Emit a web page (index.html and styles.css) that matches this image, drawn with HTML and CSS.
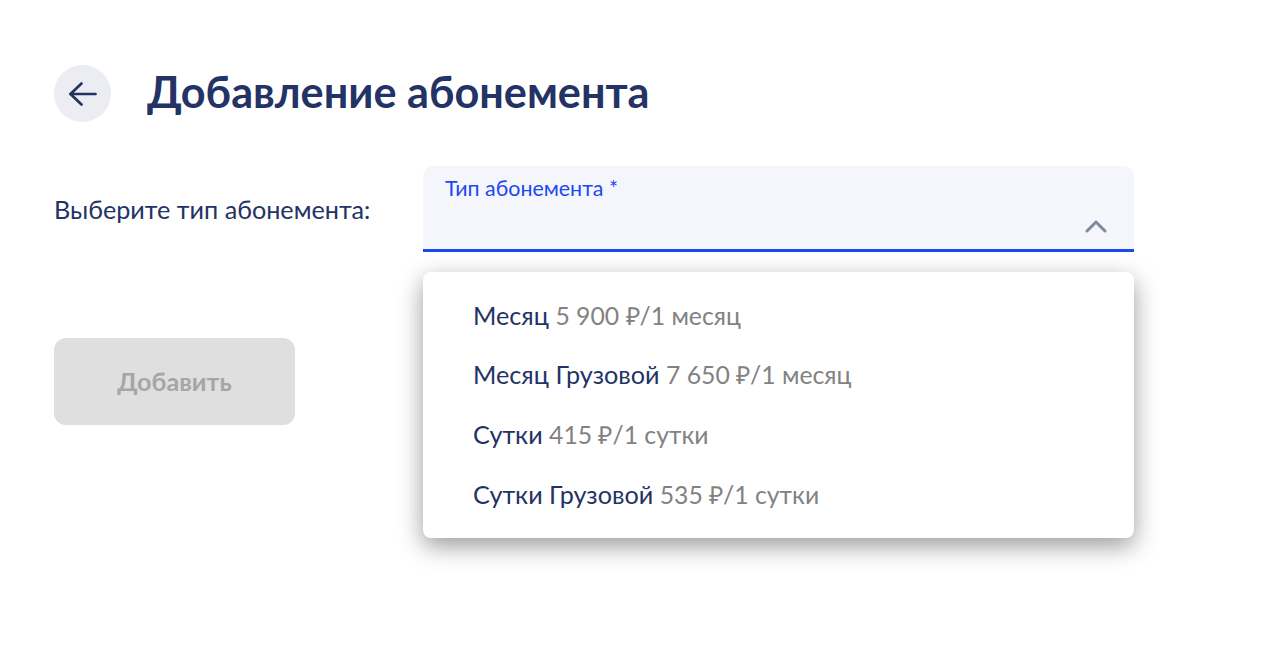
FILE: index.html
```html
<!DOCTYPE html>
<html lang="ru">
<head>
	<meta charset="UTF-8">
	<title>Добавление абонемента</title>
	<link rel="stylesheet" href="styles.css">
</head>
<body>
	<div class="page">
		<div class="page-header">
			<div class="back-button">
				<svg width="32" height="32" viewBox="0 0 32 32" fill="none" stroke="#223263" stroke-width="2.7" stroke-linecap="round" stroke-linejoin="round">
					<path d="M28.5 16H3.5"/>
					<path d="M14.5 5.5L3.5 16L14.5 26.5"/>
				</svg>
			</div>
			<h1 class="page-title">Добавление абонемента</h1>
		</div>

		<div class="form-row">
			<div class="form-label">Выберите тип абонемента:</div>
			<div class="select">
				<div class="select-field">
					<div class="select-caption">Тип абонемента *</div>
					<svg class="select-arrow" width="24" height="14" viewBox="0 0 24 14" fill="none" stroke="#7f89a3" stroke-width="3" stroke-linecap="round" stroke-linejoin="round">
						<path d="M3 12L12 3L21 12"/>
					</svg>
				</div>
				<div class="select-menu">
					<div class="select-item">Месяц <span class="select-price">5 900 ₽/1 месяц</span></div>
					<div class="select-item">Месяц Грузовой <span class="select-price">7 650 ₽/1 месяц</span></div>
					<div class="select-item">Сутки <span class="select-price">415 ₽/1 сутки</span></div>
					<div class="select-item">Сутки Грузовой <span class="select-price">535 ₽/1 сутки</span></div>
				</div>
			</div>
		</div>

		<button class="add-button" disabled>Добавить</button>
	</div>
</body>
</html>
```

FILE: styles.css
```css
html {
	background-color: white;
	font-family: Lato, "Open Sans", sans-serif;
}
body {
	margin: 0;
}
.page {
	box-sizing: border-box;
	min-height: 100vh;
	padding: 65px 0 0 54px;
}
.page-header {
	display: flex;
	align-items: center;
	gap: 36px;
}
.back-button {
	display: flex;
	align-items: center;
	justify-content: center;
	flex: none;
	width: 57px;
	height: 57px;
	border-radius: 50%;
	background-color: #ebedf2;
}
.page-title {
	margin: 0 0 5px;
	font-size: 43.2px;
	line-height: 52px;
	font-weight: bold;
	color: #243365;
}
.form-row {
	display: flex;
	margin-top: 44px;
}
.form-label {
	width: 369px;
	padding-top: 27px;
	font-size: 25.2px;
	line-height: 32px;
	color: #243365;
}
.select {
	position: relative;
	width: 711px;
}
.select-field {
	position: relative;
	box-sizing: border-box;
	height: 86px;
	padding: 9px 22px 0;
	border-radius: 10px 10px 0 0;
	border-bottom: 3px solid #1c48f0;
	background-color: #f5f6fb;
}
.select-caption {
	font-size: 21.4px;
	line-height: 26px;
	color: #1c48f0;
}
.select-arrow {
	position: absolute;
	right: 26px;
	bottom: 16px;
}
.select-menu {
	position: absolute;
	top: 106px;
	left: 0;
	right: 0;
	box-sizing: border-box;
	height: 266px;
	padding: 13.6px 0;
	border-radius: 8px;
	background-color: white;
	box-shadow: 0 8px 24px rgba(0, 0, 0, 0.4);
}
.select-item {
	height: 59.7px;
	padding: 0 50px;
	font-size: 25.2px;
	line-height: 59.7px;
	color: #243365;
}
.select-price {
	font-size: 24.75px;
	color: #828282;
}
.add-button {
	display: block;
	width: 241px;
	height: 87px;
	margin-top: 86px;
	padding-bottom: 3px;
	border: none;
	border-radius: 12px;
	background-color: #dfdfdf;
	font-family: inherit;
	font-size: 25.2px;
	font-weight: bold;
	color: #a6a6a6;
}
```
